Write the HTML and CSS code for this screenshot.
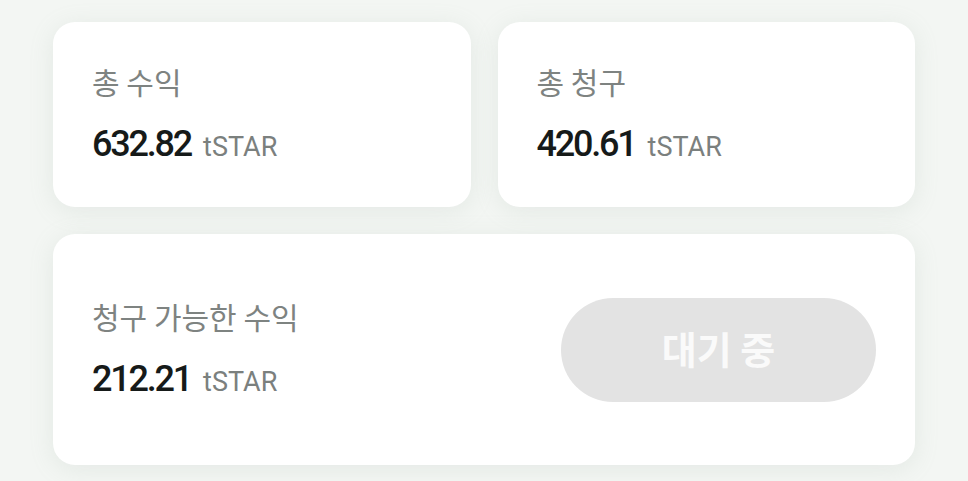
FILE: index.html
```html
<!DOCTYPE html>
<html>
<head>
    <meta charset="UTF-8">
    <title>수익</title>
    <link rel="stylesheet" href="styles.css">
</head>
<body>
    <div class="earnings">
        <div class="card">
            <p class="label">총 수익</p>
            <p class="amount"><span class="value">632.82</span><span class="unit">tSTAR</span></p>
        </div>
        <div class="card">
            <p class="label">총 청구</p>
            <p class="amount"><span class="value">420.61</span><span class="unit">tSTAR</span></p>
        </div>
        <div class="card wide">
            <div class="claimInfo">
                <p class="label">청구 가능한 수익</p>
                <p class="amount"><span class="value">212.21</span><span class="unit">tSTAR</span></p>
            </div>
            <button class="claimButton" disabled>대기 중</button>
        </div>
    </div>
</body>
</html>
```
FILE: styles.css
```css
body {
    margin: 0;
    background-color: #f3f6f3;
    font-family: "Roboto", "Noto Sans CJK KR", sans-serif;
}
p {
    margin: 0;
}
.earnings {
    display: grid;
    grid-template-columns: 1fr 1fr;
    gap: 27px;
    padding: 22px 53px;
}
.card {
    background-color: #ffffff;
    border-radius: 22px;
    box-shadow: 0 4px 24px rgba(150, 170, 155, 0.16);
    padding: 0 39px;
    height: 185px;
    display: flex;
    flex-direction: column;
    justify-content: center;
}
.wide {
    grid-column: 1 / 3;
    height: 231px;
    flex-direction: row;
    align-items: center;
    justify-content: space-between;
}
.label {
    font-family: "Noto Sans CJK KR", sans-serif;
    font-size: 30px;
    line-height: 36px;
    color: #7e8381;
    margin-bottom: 25px;
}
.amount {
    display: flex;
    align-items: baseline;
    line-height: 40px;
}
.value {
    font-size: 36px;
    font-weight: 500;
    letter-spacing: -2.2px;
    color: #161a19;
}
.unit {
    font-size: 27px;
    color: #7b807e;
    margin-left: 12px;
}
.claimButton {
    width: 315px;
    height: 104px;
    border: none;
    border-radius: 52px;
    background-color: #e3e3e3;
    color: #fafafa;
    font-family: "Noto Sans CJK KR", sans-serif;
    font-size: 38px;
    font-weight: 700;
    padding: 0 0 5px;
}
```
